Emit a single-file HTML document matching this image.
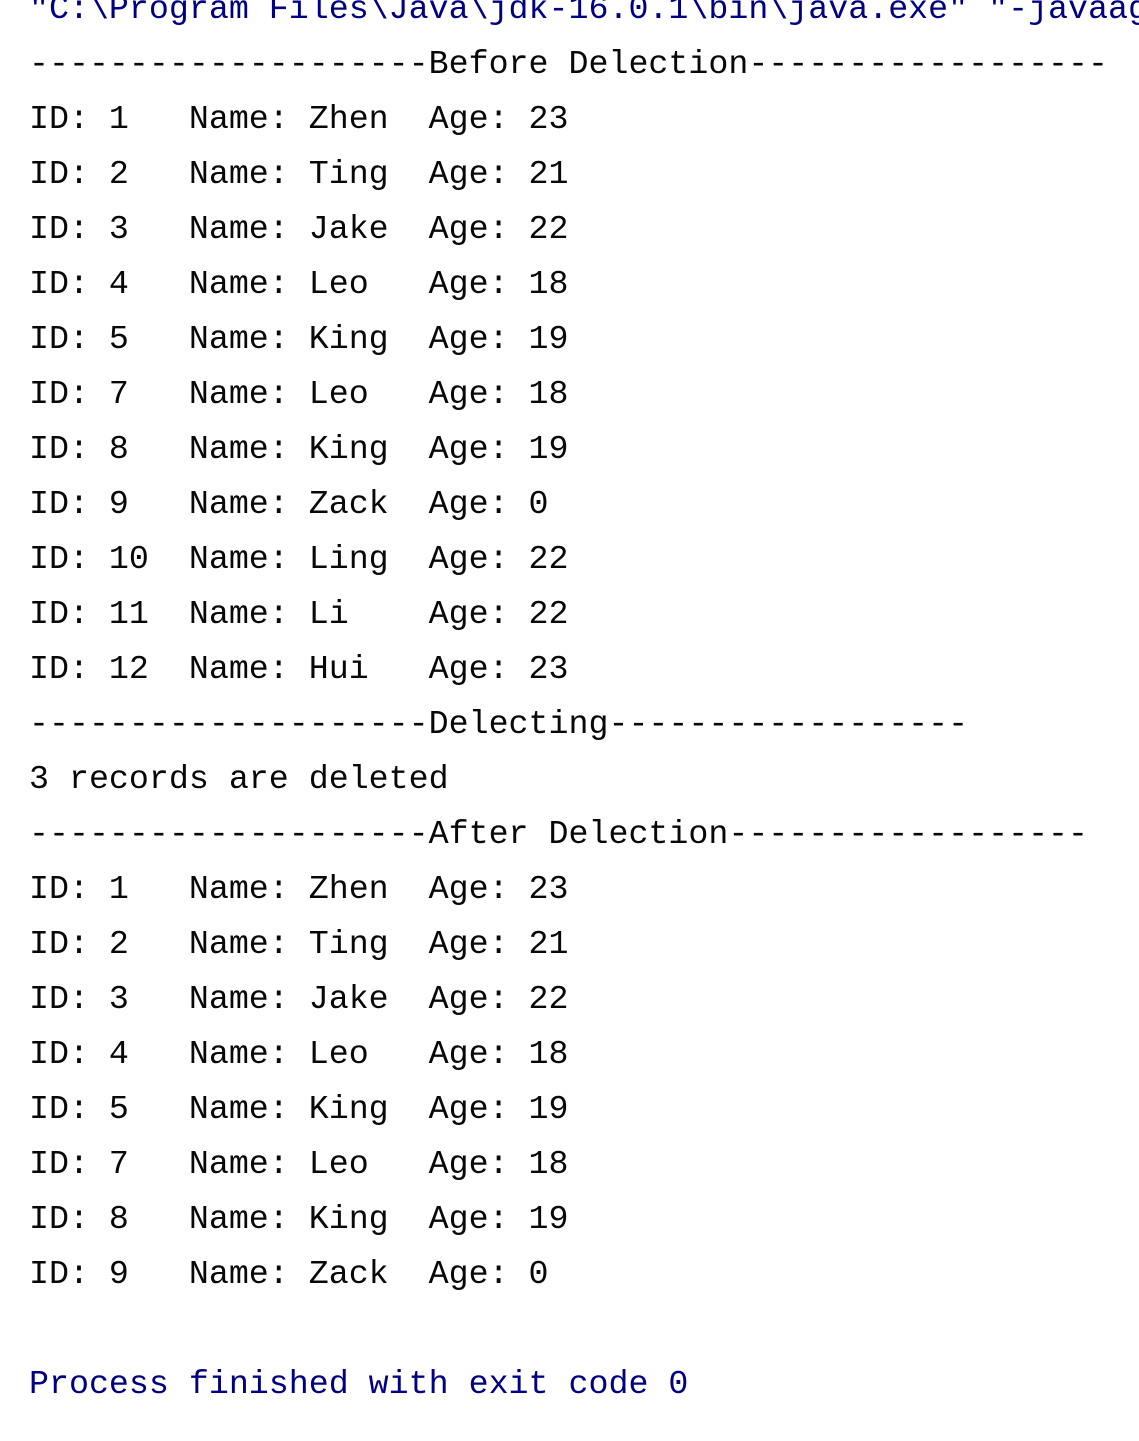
<!DOCTYPE html>
<html><head><meta charset="utf-8"><style>
html,body{margin:0;padding:0;background:#fff;width:1139px;height:1441px;overflow:hidden}
pre{position:absolute;left:29px;top:-18px;width:1110px;overflow:hidden;margin:0;font-family:"Liberation Mono",monospace;font-size:33.3px;line-height:55px;color:#080808;white-space:pre}
.b{color:#000080}
</style></head><body><pre><span class="b">"C:\Program Files\Java\jdk-16.0.1\bin\java.exe" "-javaag</span>
--------------------Before Delection------------------
ID: 1   Name: Zhen  Age: 23
ID: 2   Name: Ting  Age: 21
ID: 3   Name: Jake  Age: 22
ID: 4   Name: Leo   Age: 18
ID: 5   Name: King  Age: 19
ID: 7   Name: Leo   Age: 18
ID: 8   Name: King  Age: 19
ID: 9   Name: Zack  Age: 0
ID: 10  Name: Ling  Age: 22
ID: 11  Name: Li    Age: 22
ID: 12  Name: Hui   Age: 23
--------------------Delecting------------------
3 records are deleted
--------------------After Delection------------------
ID: 1   Name: Zhen  Age: 23
ID: 2   Name: Ting  Age: 21
ID: 3   Name: Jake  Age: 22
ID: 4   Name: Leo   Age: 18
ID: 5   Name: King  Age: 19
ID: 7   Name: Leo   Age: 18
ID: 8   Name: King  Age: 19
ID: 9   Name: Zack  Age: 0

<span class="b">Process finished with exit code 0</span></pre></body></html>
